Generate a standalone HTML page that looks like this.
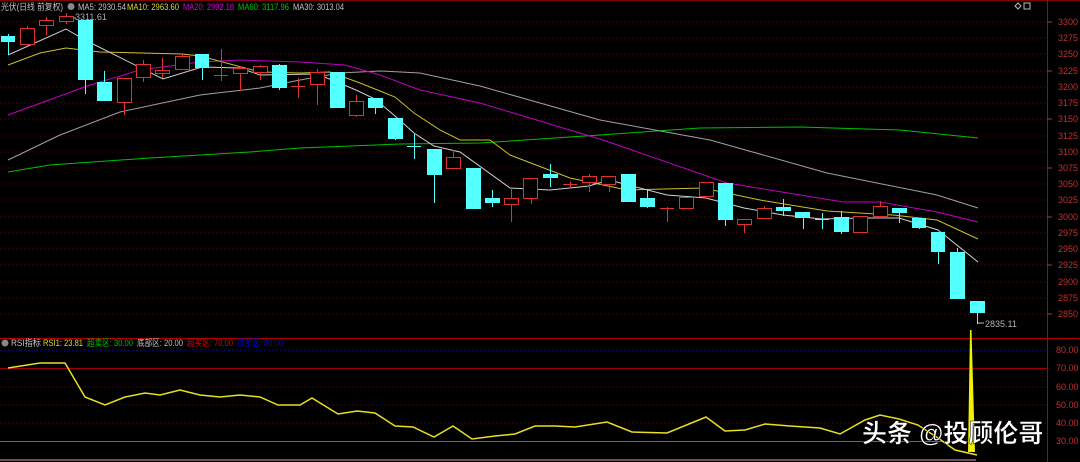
<!DOCTYPE html><html><head><meta charset="utf-8"><style>
body{margin:0;background:#000;width:1080px;height:462px;overflow:hidden;font-family:"Liberation Sans","Noto Sans CJK SC",sans-serif}
svg{display:block}
</style></head><body>
<svg width="1080" height="462" xmlns="http://www.w3.org/2000/svg" font-family="Liberation Sans, Noto Sans CJK SC, sans-serif">
<rect width="1080" height="462" fill="#000"/>
<rect x="0" y="0" width="1080" height="1" fill="#800000"/>
<g stroke="#4a0000" stroke-width="1" stroke-dasharray="2,2">
<line x1="0" y1="22" x2="1047" y2="22"/><line x1="0" y1="38" x2="1047" y2="38"/><line x1="0" y1="54" x2="1047" y2="54"/><line x1="0" y1="71" x2="1047" y2="71"/><line x1="0" y1="87" x2="1047" y2="87"/><line x1="0" y1="103" x2="1047" y2="103"/><line x1="0" y1="119" x2="1047" y2="119"/><line x1="0" y1="136" x2="1047" y2="136"/><line x1="0" y1="152" x2="1047" y2="152"/><line x1="0" y1="168" x2="1047" y2="168"/><line x1="0" y1="184" x2="1047" y2="184"/><line x1="0" y1="200" x2="1047" y2="200"/><line x1="0" y1="217" x2="1047" y2="217"/><line x1="0" y1="233" x2="1047" y2="233"/><line x1="0" y1="249" x2="1047" y2="249"/><line x1="0" y1="265" x2="1047" y2="265"/><line x1="0" y1="282" x2="1047" y2="282"/><line x1="0" y1="298" x2="1047" y2="298"/><line x1="0" y1="314" x2="1047" y2="314"/>
<line x1="0" y1="387" x2="1047" y2="387"/><line x1="0" y1="405" x2="1047" y2="405"/><line x1="0" y1="423" x2="1047" y2="423"/>
</g>
<line x1="1047.5" y1="0" x2="1047.5" y2="462" stroke="#b00000"/>
<line x1="0" y1="338.5" x2="1080" y2="338.5" stroke="#b00000"/>
<g fill="#c03030" font-size="9">
<text x="1058" y="25">3300</text><text x="1058" y="41">3275</text><text x="1058" y="57">3250</text><text x="1058" y="74">3225</text><text x="1058" y="90">3200</text><text x="1058" y="106">3175</text><text x="1058" y="122">3150</text><text x="1058" y="139">3125</text><text x="1058" y="155">3100</text><text x="1058" y="171">3075</text><text x="1058" y="187">3050</text><text x="1058" y="203">3025</text><text x="1058" y="220">3000</text><text x="1058" y="236">2975</text><text x="1058" y="252">2950</text><text x="1058" y="268">2925</text><text x="1058" y="285">2900</text><text x="1058" y="301">2875</text><text x="1058" y="317">2850</text>
<text x="1056" y="353">80.00</text><text x="1056" y="371">70.00</text><text x="1056" y="390">60.00</text><text x="1056" y="408">50.00</text><text x="1056" y="426">40.00</text><text x="1056" y="444">30.00</text>
</g>
<g stroke="#c03030" stroke-width="1"><line x1="1047" y1="22" x2="1052" y2="22"/><line x1="1047" y1="71" x2="1052" y2="71"/><line x1="1047" y1="119" x2="1052" y2="119"/><line x1="1047" y1="168" x2="1052" y2="168"/><line x1="1047" y1="217" x2="1052" y2="217"/><line x1="1047" y1="265" x2="1052" y2="265"/><line x1="1047" y1="314" x2="1052" y2="314"/></g>
<!-- header -->
<g font-size="9" lengthAdjust="spacingAndGlyphs">
<text x="1" y="10" fill="#c0c0c0" textLength="62" lengthAdjust="spacingAndGlyphs">光伏(日线 前复权)</text>
<circle cx="71" cy="6.5" r="3.5" fill="#888"/>
<text x="78" y="10" fill="#c0c0c0" textLength="48" lengthAdjust="spacingAndGlyphs">MA5: 2930.54</text>
<text x="127" y="10" fill="#d8d840" textLength="52" lengthAdjust="spacingAndGlyphs">MA10: 2963.60</text>
<text x="183" y="10" fill="#d000d0" textLength="51" lengthAdjust="spacingAndGlyphs">MA20: 2992.18</text>
<text x="238" y="10" fill="#00c000" textLength="51" lengthAdjust="spacingAndGlyphs">MA60: 3117.96</text>
<text x="293" y="10" fill="#c0c0c0" textLength="51" lengthAdjust="spacingAndGlyphs">MA30: 3013.04</text>
<text x="75" y="20" fill="#b0b0b0">3311.61</text>
<text x="985" y="327" fill="#b0b0b0">2835.11</text>
</g>
<g fill="none" stroke="#bbb" stroke-width="1"><rect x="1024" y="3" width="6" height="6"/><path d="M1018 3l3 3-3 3-3-3z"/></g>
<line x1="70" y1="18" x2="76" y2="18" stroke="#bbb"/><line x1="978" y1="323" x2="984" y2="323" stroke="#bbb"/>
<!-- MA lines -->
<g fill="none" stroke-width="1">
<polyline stroke="#00c000" points="8,172 50,165 150,158 250,152 300,148 400,144 480,143 600,135 700,128 800,127 900,130 978,138"/>
<polyline stroke="#a0a0a0" points="8,160 60,135 120,112 200,95 260,88 300,80 340,73 380,71 420,73 480,86 600,120 710,140 827,173 937,195 978,208"/>
<polyline stroke="#c000c0" points="8,115 90,85 140,70 200,62 240,60 300,62 345,65 380,75 420,90 480,103 603,140 727,183 843,202 880,202 937,212 978,222"/>
<polyline stroke="#c8c030" points="8,65 40,53 66,48 100,52 182,54 200,56 260,72 300,73 330,72 360,83 395,97 414,113 440,130 460,140 490,140 510,155 570,178 627,190 703,188 760,200 827,211 893,215 937,220 978,239"/>
<polyline stroke="#d0d0d0" points="8,55 66,29 85,40 163,79 202,67 240,68 260,75 317,74 337,82 356,90 375,99 395,116 414,133 434,146 460,152 510,188 550,190 589,186 609,180 628,185 667,195 706,198 744,208 783,215 822,219 860,218 899,218 938,230 978,262"/>
</g>
<!-- candles -->
<g>
<g stroke="#e03030" fill="none" stroke-width="1">
<path d="M27.5 26v20M46.5 17v18M66.5 13v11M124.5 78v37M143.5 60v22M162.5 58v20M182.5 53v17M221.5 49v32M240.5 66v25M260.5 65v15M298.5 78v20M317.5 69v36M356.5 95v22M453.5 150v18M511.5 187v35M531.5 178v26M570.5 181v7M589.5 174v18M609.5 176v16M667.5 207v15M686.5 197v11M706.5 182v17M744.5 219v14M764.5 206v12M860.5 216v16M880.5 201v15"/>
<rect x="20.5" y="28.5" width="14" height="16" fill="#000"/><rect x="39.5" y="20.5" width="14" height="5" fill="#000"/><rect x="59.5" y="16.5" width="14" height="5" fill="#000"/><rect x="117.5" y="78.5" width="14" height="24" fill="#000"/><rect x="136.5" y="64.5" width="14" height="13" fill="#000"/><rect x="155.5" y="70.5" width="14" height="3" fill="#000"/><rect x="175.5" y="56.5" width="14" height="13" fill="#000"/><path d="M214 75.5h14"/><rect x="233.5" y="68.5" width="14" height="5" fill="#000"/><rect x="253.5" y="66.5" width="14" height="6" fill="#000"/><path d="M291 86.5h14"/><rect x="310.5" y="72.5" width="14" height="12" fill="#000"/><rect x="349.5" y="101.5" width="14" height="14" fill="#000"/><rect x="446.5" y="157.5" width="14" height="11" fill="#000"/><rect x="504.5" y="198.5" width="14" height="6" fill="#000"/><rect x="523.5" y="178.5" width="14" height="20" fill="#000"/><path d="M563 184.5h14"/><rect x="582.5" y="176.5" width="14" height="6" fill="#000"/><rect x="601.5" y="176.5" width="14" height="8" fill="#000"/><path d="M660 208.5h14"/><rect x="679.5" y="197.5" width="14" height="11" fill="#000"/><rect x="699.5" y="182.5" width="14" height="14" fill="#000"/><rect x="737.5" y="219.5" width="14" height="5" fill="#000"/><rect x="757.5" y="208.5" width="14" height="10" fill="#000"/><rect x="853.5" y="216.5" width="14" height="16" fill="#000"/><rect x="873.5" y="206.5" width="14" height="10" fill="#000"/>
</g>
<g stroke="#54ffff" stroke-width="1"><path d="M8.5 34v21M85.5 20v74M104.5 71v30M202.5 54v26M279.5 64v26M337.5 72v36M375.5 98v16M395.5 118v22M414.5 134v25M434.5 149v54M473.5 168v41M492.5 190v17M550.5 164v23M628.5 174v28M647.5 190v18M725.5 183v43M783.5 199v17M803.5 212v17M822.5 213v16M841.5 211v23M899.5 208v15M919.5 218v11M938.5 232v32M957.5 248v51M977.5 301v23M815 219.5h14M407 146.5h14"/></g>
<g fill="#54ffff">
<rect x="1" y="36" width="14" height="6"/><rect x="78" y="20" width="15" height="60"/><rect x="97" y="82" width="15" height="19"/><rect x="195" y="54" width="14" height="14"/><rect x="272" y="65" width="15" height="23"/><rect x="330" y="72" width="15" height="36"/><rect x="368" y="98" width="15" height="10"/><rect x="388" y="118" width="15" height="21"/><rect x="427" y="149" width="15" height="26"/><rect x="466" y="168" width="15" height="41"/><rect x="485" y="198" width="15" height="5"/><rect x="543" y="174" width="15" height="4"/><rect x="621" y="174" width="15" height="28"/><rect x="640" y="198" width="15" height="9"/><rect x="718" y="183" width="15" height="37"/><rect x="776" y="207" width="15" height="4"/><rect x="795" y="212" width="15" height="6"/><rect x="834" y="217" width="15" height="15"/><rect x="892" y="208" width="15" height="5"/><rect x="912" y="218" width="14" height="10"/><rect x="931" y="232" width="14" height="20"/><rect x="950" y="252" width="15" height="47"/><rect x="970" y="301" width="15" height="12"/>
</g>
</g>
<!-- RSI panel -->
<g font-size="9">
<circle cx="5" cy="343" r="3.5" fill="#888"/>
<text x="11" y="346" fill="#c0c0c0" textLength="30" lengthAdjust="spacingAndGlyphs">RSI指标</text>
<text x="43" y="346" fill="#d8d840" textLength="40" lengthAdjust="spacingAndGlyphs">RSI1: 23.81</text>
<text x="87" y="346" fill="#00c000" textLength="46" lengthAdjust="spacingAndGlyphs">超卖区: 30.00</text>
<text x="137" y="346" fill="#c0c0c0" textLength="46" lengthAdjust="spacingAndGlyphs">底部区: 20.00</text>
<text x="187" y="346" fill="#e00000" textLength="46" lengthAdjust="spacingAndGlyphs">超买区: 70.00</text>
<text x="237" y="346" fill="#0000e0" textLength="46" lengthAdjust="spacingAndGlyphs">顶部区: 80.00</text>
</g>
<line x1="0" y1="350" x2="1047" y2="350" stroke="#0000c0" stroke-dasharray="2,2"/>
<line x1="0" y1="368.5" x2="1047" y2="368.5" stroke="#a00000"/>
<line x1="0" y1="441.5" x2="977" y2="441.5" stroke="#00b000"/>
<line x1="0" y1="460" x2="976" y2="460" stroke="#705050" stroke-width="2"/>
<polyline fill="none" stroke="#e8e020" stroke-width="1.5" points="8,368 40,363 65,363 85,397 105,405 125,397 145,393 160,395 180,390 200,395 220,397 240,395 260,397 278,405 300,405 312,398 338,414 357,411 375,413 395,426 413,427 434,437 453,426 472,439 495,436 515,434 535,426 555,426 575,427 607,422 632,432 667,433 706,417 725,431 745,430 765,424 790,426 820,428 840,434 865,420 880,415 899,419 918,425 938,438 955,450 977,455"/>
<polygon points="970,330 971.5,330 975,452 968,452" fill="#f0f000"/>
<text x="862" y="442" fill="#fff" font-size="25" font-weight="bold" stroke="#000" stroke-width="0.5">头条 @投顾伦哥</text>
</svg>
</body></html>
